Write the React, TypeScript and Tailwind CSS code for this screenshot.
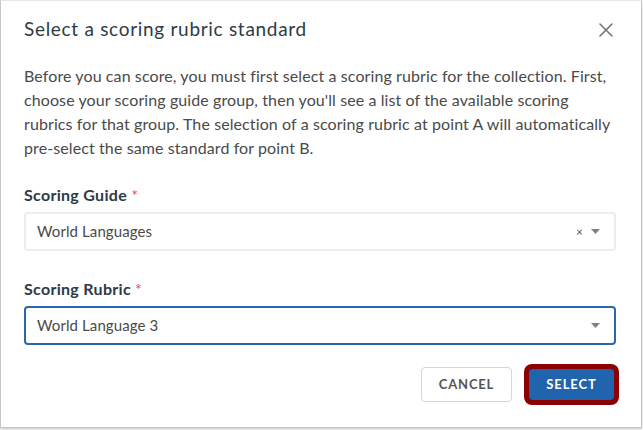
import React from "react";

export default function App() {
  return (
    <div className="w-[643px] h-[430px] bg-white" style={{ fontFamily: "Lato, 'Open Sans', sans-serif" }}>
      <div className="w-[642px] h-[428px] border border-[#c7c7c7] border-t-[#e6e6e6] shadow-[0_1px_2px_rgba(0,0,0,0.25)] bg-white flex flex-col">
        <div className="flex items-center justify-between pl-[23px] pr-[28px] pt-[12px] h-[43px]">
          <h1 className="text-[19px] leading-[24px] text-[#2d3b45] font-normal tracking-[0.7px]">Select a scoring rubric standard</h1>
          <svg width="14" height="14" viewBox="0 0 14 14" className="mt-[2px]">
            <path d="M1 1 L13 13 M13 1 L1 13" stroke="#6b7780" strokeWidth="1.6" strokeLinecap="round" />
          </svg>
        </div>
        <div className="px-[23px] pt-[20px]">
          <p className="text-[16px] leading-[24px] text-[#4a4a4a] tracking-[0.1px] whitespace-nowrap">
            <span className="block">Before you can score, you must first select a scoring rubric for the collection. First,</span>
            <span className="block">choose your scoring guide group, then you'll see a list of the available scoring</span>
            <span className="block">rubrics for that group. The selection of a scoring rubric at point A will automatically</span>
            <span className="block">pre-select the same standard for point B.</span>
          </p>
          <div className="mt-[25px]">
            <div className="text-[16px] leading-[20px] font-bold text-[#2d3b45] tracking-[0.3px]">
              Scoring Guide <span className="text-[#d9534f] font-normal">*</span>
            </div>
            <div className="mt-[7px] h-[39px] w-[592px] border-2 border-[#ededed] rounded-[4px] flex items-center pl-[11px] pr-[14px]">
              <span className="flex-1 text-[15px] text-[#4a4a4a] tracking-[0.1px]">World Languages</span>
              <span className="text-[12px] text-[#555] mr-[8px] leading-none">×</span>
              <svg width="9" height="5" viewBox="0 0 9 5"><path d="M0 0 L9 0 L4.5 5 Z" fill="#808080" /></svg>
            </div>
          </div>
          <div className="mt-[28px]">
            <div className="text-[16px] leading-[20px] font-bold text-[#2d3b45] tracking-[0.3px]">
              Scoring Rubric <span className="text-[#d9534f] font-normal">*</span>
            </div>
            <div className="mt-[7px] h-[39px] w-[592px] border-2 border-[#2a66ad] rounded-[4px] flex items-center pl-[11px] pr-[14px]">
              <span className="flex-1 text-[15px] text-[#4a4a4a] tracking-[0.1px]">World Language 3</span>
              <svg width="9" height="5" viewBox="0 0 9 5"><path d="M0 0 L9 0 L4.5 5 Z" fill="#808080" /></svg>
            </div>
          </div>
          <div className="mt-[19px] flex justify-end items-center gap-[12px] mr-[-1px]">
            <button className="w-[91px] h-[35px] border border-[#d6d6d6] rounded-[4px] text-[13px] font-bold tracking-[0.8px] text-[#555]">CANCEL</button>
            <div className="rounded-[8px] bg-[#8b0000] p-[5px]">
              <button className="w-[85px] h-[31px] rounded-[4px] bg-[#1f64ad] text-white text-[13px] font-bold tracking-[0.9px]">SELECT</button>
            </div>
          </div>
        </div>
      </div>
    </div>
  );
}
